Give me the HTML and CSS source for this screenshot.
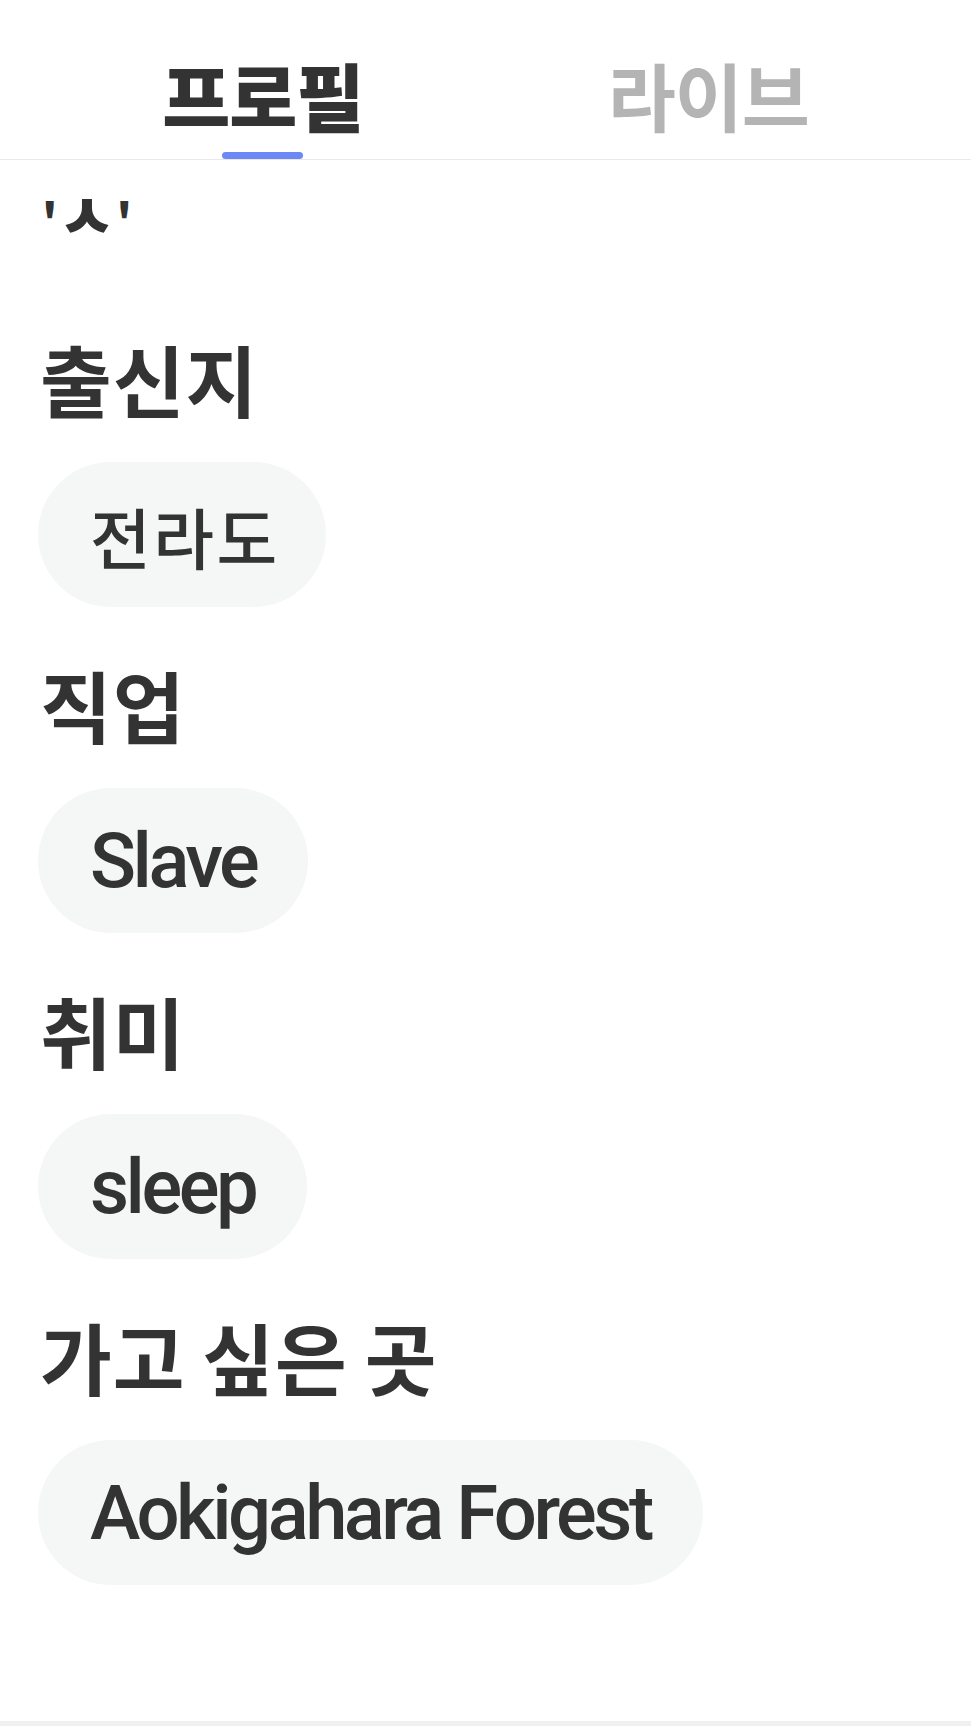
FILE: index.html
```html
<!DOCTYPE html>
<html lang="ko">
<head>
<meta charset="utf-8">
<title>프로필</title>
<link rel="stylesheet" href="styles.css">
</head>
<body>
<div class="page">
  <nav class="tabs">
    <div class="tab active"><span class="tab-label">프로필</span><span class="tab-bar"></span></div>
    <div class="tab"><span class="tab-label">라이브</span></div>
  </nav>
  <main class="content">
    <p class="status">'<span class="status-face">ㅅ</span>'</p>
    <section class="group">
      <h2 class="group-title">출신지</h2>
      <div class="chip chip-ko">전라도</div>
    </section>
    <section class="group">
      <h2 class="group-title">직업</h2>
      <div class="chip">Slave</div>
    </section>
    <section class="group">
      <h2 class="group-title">취미</h2>
      <div class="chip">sleep</div>
    </section>
    <section class="group">
      <h2 class="group-title">가고 싶은 곳</h2>
      <div class="chip">Aokigahara Forest</div>
    </section>
  </main>
  <div class="bottom-bar"></div>
</div>
</body>
</html>
```

FILE: styles.css
```css
* {
  box-sizing: border-box;
}

html, body {
  margin: 0;
  padding: 0;
  background: #ffffff;
}

body {
  font-family: Roboto, "Noto Sans CJK KR", sans-serif;
  color: #333333;
}

.page {
  width: 971px;
  height: 1726px;
  display: flex;
  flex-direction: column;
  overflow: hidden;
}

.tabs {
  display: flex;
  padding: 0 40px;
  height: 160px;
  border-bottom: 1px solid #e8e8e8;
  flex-shrink: 0;
}

.tab {
  flex: 1;
  display: flex;
  flex-direction: column;
  align-items: center;
  justify-content: flex-end;
  position: relative;
}

.tab-label {
  font-family: "Noto Sans CJK KR", sans-serif;
  font-size: 74px;
  font-weight: 700;
  letter-spacing: -1px;
  line-height: 1;
  color: #b4b4b4;
  margin-bottom: 28px;
}

.tab.active .tab-label {
  color: #333333;
  font-weight: 900;
}

.tab-bar {
  position: absolute;
  bottom: 0;
  width: 81px;
  height: 7px;
  border-radius: 4px;
  background: #6b88f6;
}

.content {
  flex: 1;
  padding: 0 38px;
  display: flex;
  flex-direction: column;
}

.status {
  margin: 28px 0 0 4px;
  font-family: "Noto Sans CJK KR", sans-serif;
  font-size: 44px;
  font-weight: 900;
  line-height: 50px;
}

.status-face {
  font-size: 62px;
  font-weight: 900;
  margin: 0 1px;
}

.group {
  display: flex;
  flex-direction: column;
  align-items: flex-start;
  margin-top: 87px;
}

.group + .group {
  margin-top: 52px;
}

.group-title {
  margin: 0 0 39px 2px;
  font-family: "Noto Sans CJK KR", sans-serif;
  font-size: 78px;
  font-weight: 700;
  letter-spacing: 1px;
  word-spacing: -6px;
  line-height: 90px;
}

.chip {
  height: 145px;
  padding: 0 52px;
  border-radius: 73px;
  background: #f5f6f6;
  display: inline-flex;
  align-items: center;
  font-size: 76px;
  font-weight: 500;
  letter-spacing: -3.5px;
  color: #333333;
}

.chip-ko {
  padding: 0 46px 0 52px;
  font-family: "Noto Sans CJK KR", sans-serif;
  font-size: 66px;
  font-weight: 500;
  letter-spacing: 2.5px;
}

.bottom-bar {
  height: 5px;
  background: #f0f0f0;
  flex-shrink: 0;
}
```
